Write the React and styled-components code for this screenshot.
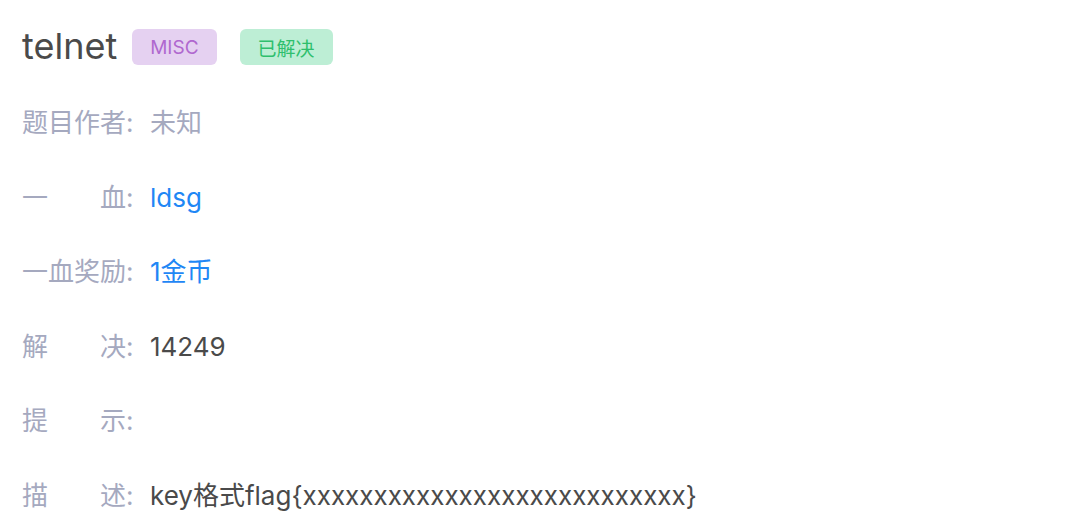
import styled, { createGlobalStyle } from 'styled-components'

const GlobalStyle = createGlobalStyle`
  body {
    margin: 0;
    background: #fff;
    font-family: Inter, "Noto Sans CJK SC", sans-serif;
  }
`

const Page = styled.div`
  padding: 25px 22px 0;
`

const Header = styled.div`
  display: flex;
  align-items: center;
  height: 44px;
`

const Title = styled.h1`
  margin: -3px 15px 0 0;
  font-size: 36px;
  font-weight: 400;
  color: #4a4a4a;
`

const Tag = styled.span`
  display: inline-flex;
  align-items: center;
  height: 36px;
  padding: 0 18px;
  margin-right: 23px;
  border-radius: 6px;
  font-size: 19px;
  background: ${p => (p.$kind === 'solved' ? '#bdeed5' : '#e5d1f1')};
  color: ${p => (p.$kind === 'solved' ? '#2ebf6d' : '#b068cf')};
`

const List = styled.div`
  display: flex;
  flex-direction: column;
  margin-top: 33px;
`

const Row = styled.div`
  display: flex;
  align-items: baseline;
  height: 74.6px;
  font-size: 26px;
`

const Label = styled.span`
  display: inline-block;
  width: 104px;
  color: #a5a9bf;
  text-align: justify;
  text-align-last: justify;
`

const Colon = styled.span`
  width: 24px;
  color: #a5a9bf;
`

const Value = styled.span`
  color: ${p => (p.$tone === 'link' ? '#1f87f5' : p.$tone === 'muted' ? '#a5a9bf' : '#4a4a4a')};
`

const rows = [
  { label: '题目作者', value: '未知', tone: 'muted' },
  { label: '一血', value: 'ldsg', tone: 'link' },
  { label: '一血奖励', value: '1金币', tone: 'link' },
  { label: '解决', value: '14249' },
  { label: '提示', value: '' },
  { label: '描述', value: 'key格式flag{xxxxxxxxxxxxxxxxxxxxxxxxxxx}' },
]

export default function App () {
  return (
    <Page>
      <GlobalStyle />
      <Header>
        <Title>telnet</Title>
        <Tag>MISC</Tag>
        <Tag $kind="solved">已解决</Tag>
      </Header>
      <List>
        {rows.map(r => (
          <Row key={r.label}>
            <Label>{r.label}</Label>
            <Colon>:</Colon>
            <Value $tone={r.tone}>{r.value}</Value>
          </Row>
        ))}
      </List>
    </Page>
  )
}
